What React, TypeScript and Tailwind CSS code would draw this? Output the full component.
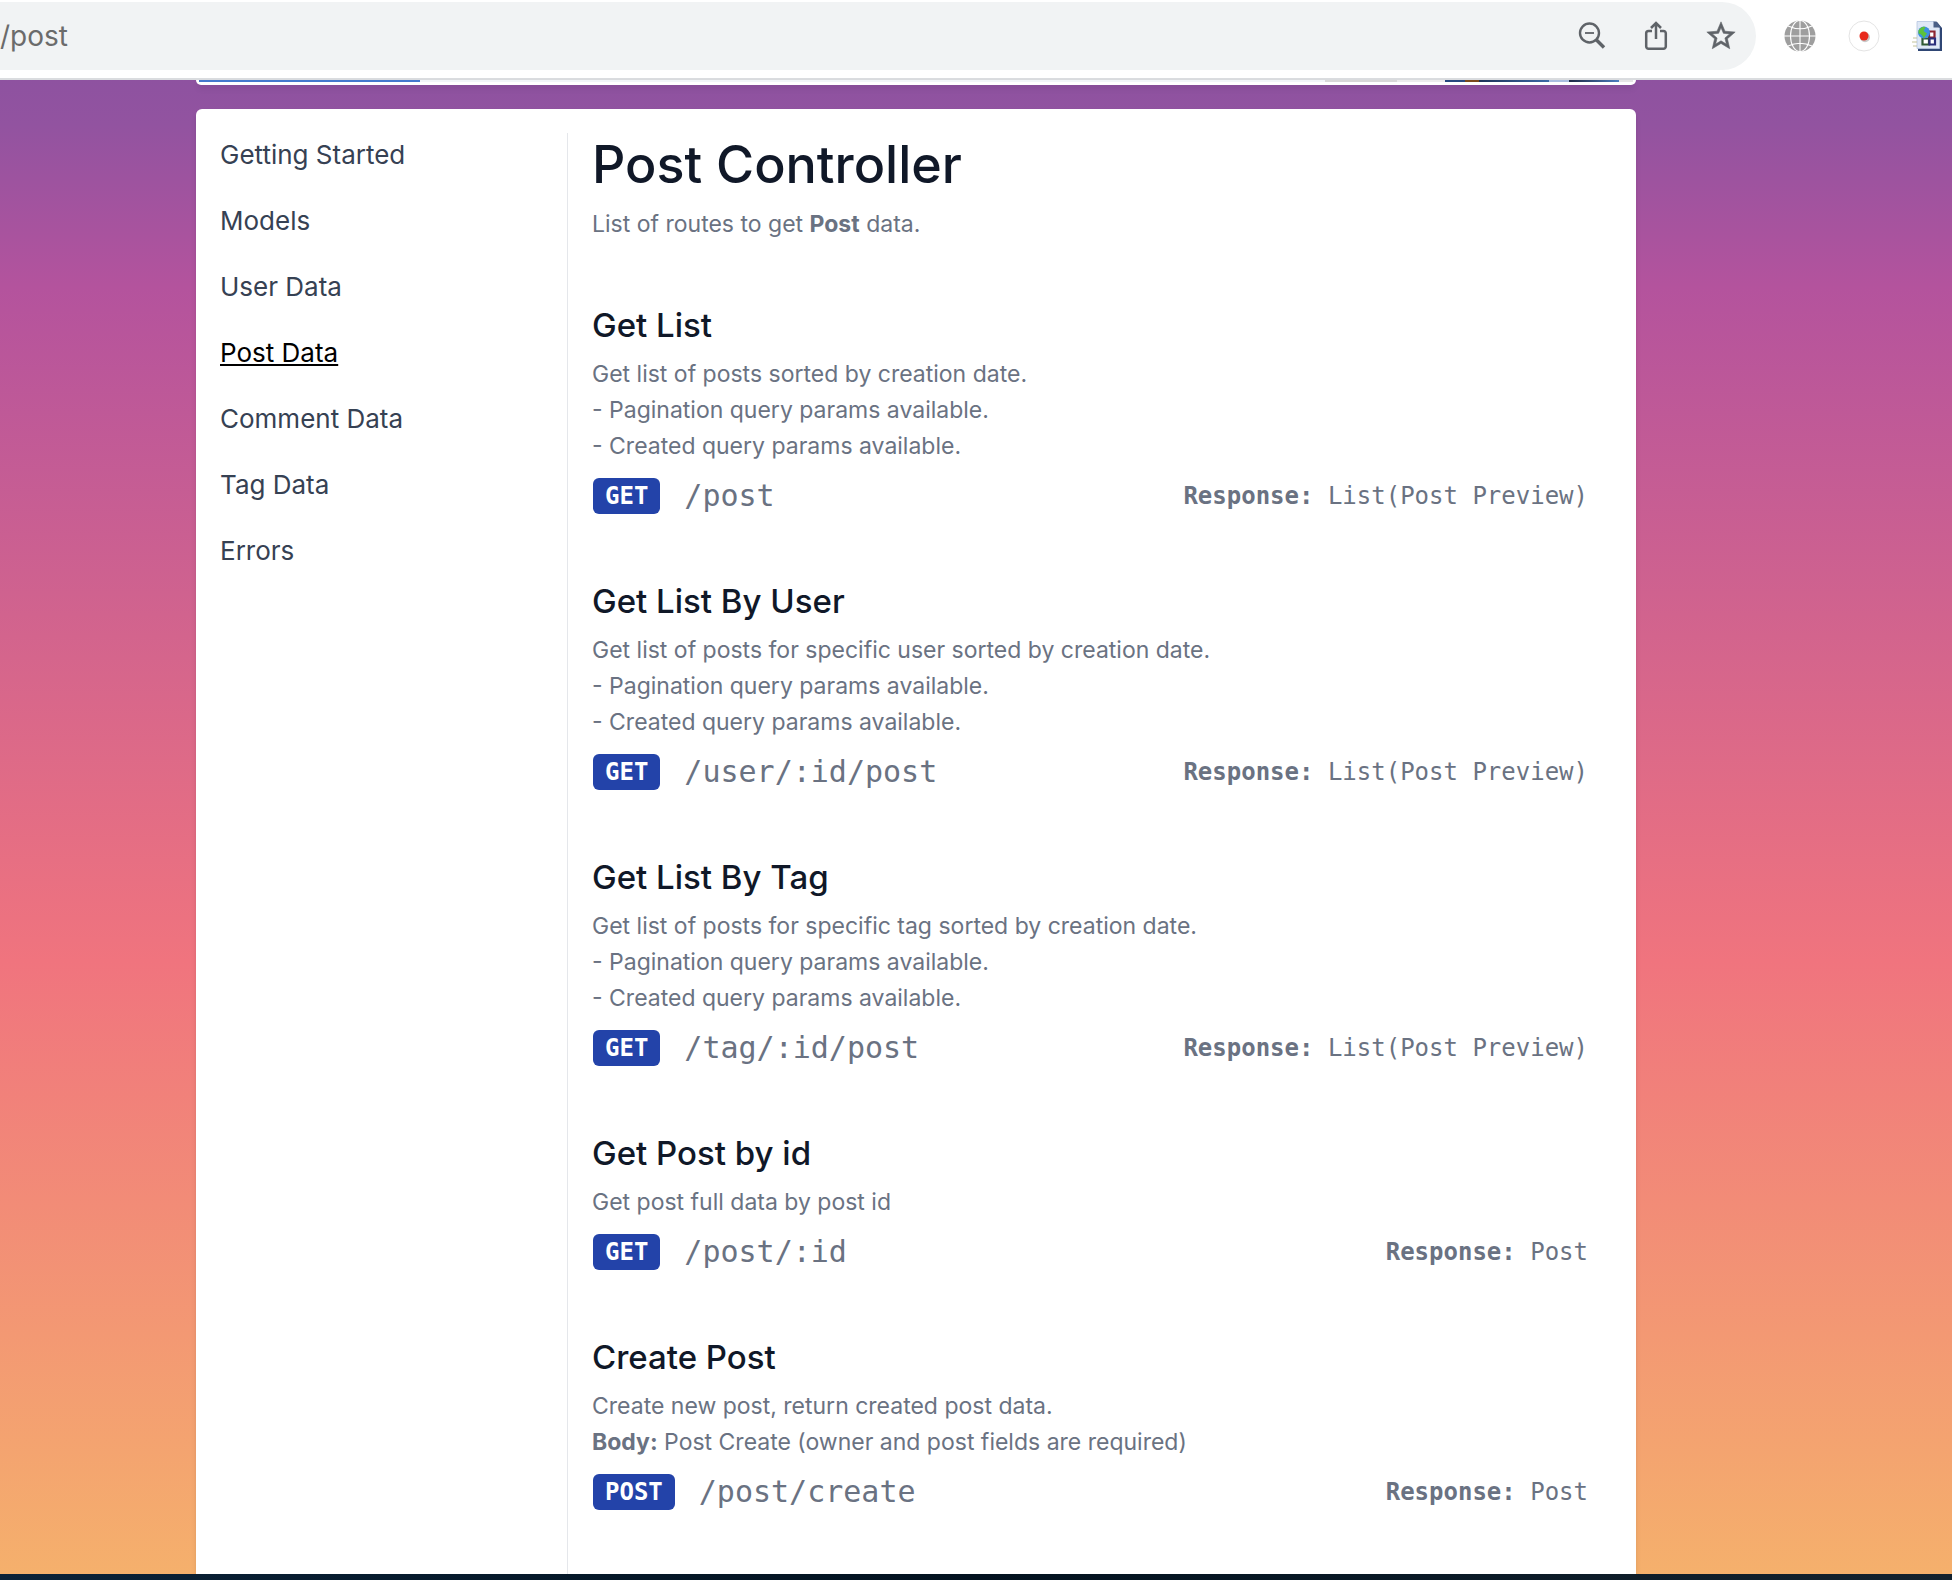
import React from "react";

type Endpoint = {
  title: string;
  lines: React.ReactNode[];
  method: "GET" | "POST";
  path: string;
  response: string;
};

const paging = ["- Pagination query params available.", "- Created query params available."];

const endpoints: Endpoint[] = [
  {
    title: "Get List",
    lines: ["Get list of posts sorted by creation date.", ...paging],
    method: "GET",
    path: "/post",
    response: "List(Post Preview)",
  },
  {
    title: "Get List By User",
    lines: ["Get list of posts for specific user sorted by creation date.", ...paging],
    method: "GET",
    path: "/user/:id/post",
    response: "List(Post Preview)",
  },
  {
    title: "Get List By Tag",
    lines: ["Get list of posts for specific tag sorted by creation date.", ...paging],
    method: "GET",
    path: "/tag/:id/post",
    response: "List(Post Preview)",
  },
  {
    title: "Get Post by id",
    lines: ["Get post full data by post id"],
    method: "GET",
    path: "/post/:id",
    response: "Post",
  },
  {
    title: "Create Post",
    lines: [
      "Create new post, return created post data.",
      <>
        <b>Body:</b> Post Create (owner and post fields are required)
      </>,
    ],
    method: "POST",
    path: "/post/create",
    response: "Post",
  },
];

const navItems = ["Getting Started", "Models", "User Data", "Post Data", "Comment Data", "Tag Data", "Errors"];

function ZoomOutIcon() {
  return (
    <svg viewBox="0 0 32 32" className="size-8" fill="none" stroke="#5f6368">
      <circle cx="13.5" cy="13" r="9.5" strokeWidth="2.4" />
      <path d="M9 13h9" strokeWidth="1.8" />
      <path d="M20 19.5l8 8" strokeWidth="3.4" />
    </svg>
  );
}

function ShareIcon() {
  return (
    <svg viewBox="0 0 32 32" className="size-8" fill="none" stroke="#5f6368" strokeWidth="2.5">
      <path d="M12 11H8.5A2.3 2.3 0 0 0 6.2 13.3V26.5A2.3 2.3 0 0 0 8.5 28.8H23.5A2.3 2.3 0 0 0 25.8 26.5V13.3A2.3 2.3 0 0 0 23.5 11H20" />
      <path d="M16 19V3.5M11 8l5-5 5 5" />
    </svg>
  );
}

function StarIcon() {
  return (
    <svg viewBox="0 0 24 24" className="size-[34px]" fill="#5f6368" stroke="#5f6368" strokeWidth=".4">
      <path d="M22 9.24l-7.19-.62L12 2 9.19 8.63 2 9.24l5.46 4.73L5.82 21 12 17.27 18.18 21l-1.63-7.03L22 9.24zM12 15.4l-3.76 2.27 1-4.28-3.32-2.88 4.38-.38L12 6.1l1.71 4.04 4.38.38-3.32 2.88 1 4.28L12 15.4z" />
    </svg>
  );
}

function GlobeIcon() {
  return (
    <svg viewBox="0 0 32 32" className="size-8" fill="none" stroke="#fff" strokeWidth="1.1">
      <circle cx="16" cy="16" r="15.5" fill="#9e9e9e" stroke="none" />
      <path d="M16 0v32M0 16h32M4 6Q16 11.5 28 6M4 26Q16 20.5 28 26" />
      <ellipse cx="16" cy="16" rx="9.5" ry="15.5" />
    </svg>
  );
}

function RecordIcon() {
  return (
    <svg viewBox="0 0 32 32" className="size-8">
      <circle cx="16" cy="16" r="15" fill="#fff" stroke="#e4e4e4" />
      <circle cx="17" cy="17.2" r="5" fill="#c9c9c9" />
      <circle cx="16" cy="16" r="4.5" fill="#e8291c" />
    </svg>
  );
}

function PageIcon() {
  return (
    <svg viewBox="0 0 32 32" className="size-8">
      <path d="M6 2h19l5 6v23H6z" fill="#2f4674" />
      <path d="M5 1.5h17l5.5 6.5V28.5H5z" fill="#dfe8f6" stroke="#b5c5e0" strokeWidth=".8" />
      <path d="M21.5 1.5h3l4.5 6h-7.5z" fill="#4a5f86" />
      <g fill="#fff" strokeWidth="2.2">
        <path d="M17 11.5h5.5v6H17z" stroke="#8e2430" />
        <path d="M10.5 18.5h6.5V24.5h-6.5z" stroke="#2f5a34" />
        <path d="M17.5 18.5H23V24.5h-5.5z" stroke="#2b2f7c" />
      </g>
      <circle cx="12" cy="12.5" r="6" fill="#3d8fe0" />
      <path d="M6.5 10.5q3-5 7-3.5l-2 4 3.5 2.5-3.5 5q-1-4.5-5-5z" fill="#5cc23a" />
      <path d="M1 18h4M0 22h5M1 26h4" stroke="#c4c49c" strokeWidth="1.2" />
    </svg>
  );
}

function BrowserBar() {
  return (
    <header className="flex h-20 items-start border-b-2 border-[#dadcdf] bg-white pt-[2px] pr-2">
      <div className="flex h-[68px] min-w-0 flex-1 items-center gap-8 rounded-r-full bg-[#f1f3f4] pr-[18px]">
        <input
          aria-label="Address"
          defaultValue="/post"
          className="min-w-0 flex-1 bg-transparent font-['Inter','Liberation_Sans',sans-serif] text-[28px] text-[#6b6b6b] outline-none"
        />
        <button aria-label="Zoom out"><ZoomOutIcon /></button>
        <button aria-label="Share"><ShareIcon /></button>
        <button aria-label="Bookmark"><StarIcon /></button>
      </div>
      <div className="flex h-[68px] items-center gap-8 pl-7">
        <button aria-label="Translate"><GlobeIcon /></button>
        <button aria-label="Record"><RecordIcon /></button>
        <button aria-label="Page tools"><PageIcon /></button>
      </div>
    </header>
  );
}

function EndpointSection({ title, lines, method, path, response }: Endpoint) {
  return (
    <section className="mb-[55px]">
      <h2 className="mb-1 text-[33px] leading-[54px] font-medium text-gray-900">{title}</h2>
      {lines.map((line, i) => (
        <p key={i} className="text-[23px] leading-9">{line}</p>
      ))}
      <div className="mt-[9px] flex h-[46px] items-center justify-between pr-6 pl-px font-['DejaVu_Sans_Mono',monospace] text-2xl">
        <div className="flex items-center gap-6">
          <span className="rounded-md bg-[#2343a9] px-3 leading-9 font-bold text-white">{method}</span>
          <span className="text-[30px]">{path}</span>
        </div>
        <div>
          <b>Response:</b> {response}
        </div>
      </div>
    </section>
  );
}

export default function App() {
  return (
    <div className="flex h-screen flex-col overflow-hidden bg-white font-['Inter','Liberation_Sans',sans-serif]">
      <BrowserBar />
      <div className="flex min-h-0 flex-1 flex-col bg-[linear-gradient(to_bottom,#8e52a0_0%,#9253a0_3%,#b4539d_14%,#f0747e_59%,#f5b06c_100%)] pr-[316px] pl-[196px]">
        <div className="flex h-[5px] shrink-0 items-start rounded-b-md bg-white px-[3px] shadow-md">
          <div className="h-[2px] w-[221px] bg-[#4479cd]" />
          <div className="h-[2px] flex-1 bg-[#f1f5f8]" />
          <div className="h-[2px] w-[72px] bg-[#d8d8d8]" />
          <div className="h-[2px] w-[48px] bg-[#ececec]" />
          <div className="h-[2px] w-[20px] bg-[#27497f]" />
          <div className="h-[2px] w-[14px] bg-[#7a4a1c]" />
          <div className="h-[2px] w-[70px] bg-linear-to-r from-[#1d3358] to-[#3b6aa6]" />
          <div className="h-[2px] w-[20px] bg-[#a9bfe0]" />
          <div className="h-[2px] w-[50px] bg-linear-to-r from-[#1d2a45] to-[#4c7fc0]" />
          <div className="h-[2px] w-[14px] bg-[#e6e6e6]" />
        </div>
        <main className="mt-6 flex min-h-0 flex-1 overflow-hidden rounded-t-md bg-white px-6 pt-6 shadow-md">
          <nav className="flex w-[348px] shrink-0 flex-col items-start gap-6 border-r border-gray-200 pt-[1px]">
            {navItems.map((item) => (
              <a
                key={item}
                href="#"
                className={
                  item === "Post Data"
                    ? "text-[26px] leading-[42px] text-black underline"
                    : "text-[26px] leading-[42px] text-gray-700"
                }
              >
                {item}
              </a>
            ))}
          </nav>
          <div className="min-w-0 flex-1 pl-6 text-gray-500">
            <h1 className="text-[52px] leading-[64px] font-medium text-gray-900">Post Controller</h1>
            <p className="mt-[9px] mb-14 text-[23px] leading-9">
              List of routes to get <b>Post</b> data.
            </p>
            {endpoints.map((e) => (
              <EndpointSection key={e.title} {...e} />
            ))}
          </div>
        </main>
      </div>
      <div className="h-[6px] shrink-0 bg-linear-to-r from-[#0b2238] via-[#03121f] to-[#14222e]" />
    </div>
  );
}
